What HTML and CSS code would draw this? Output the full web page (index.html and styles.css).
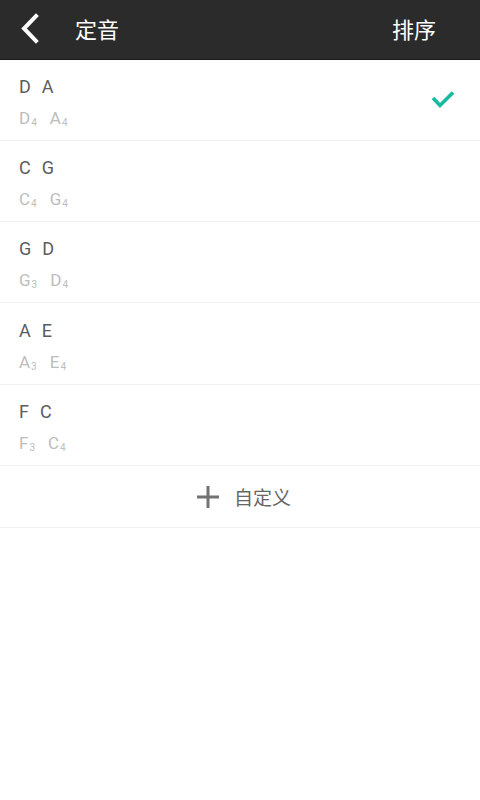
FILE: index.html
```html
<!DOCTYPE html>
<html lang="zh">
<head>
<meta charset="utf-8">
<title>定音</title>
<link rel="stylesheet" href="styles.css">
</head>
<body>
<header class="topbar">
  <svg class="back" width="22" height="32" viewBox="0 0 22 32"><polyline points="17,3 5,15.5 17,28" fill="none" stroke="#fff" stroke-width="4" stroke-linecap="square" stroke-linejoin="miter"/></svg>
  <span class="title">定音</span>
  <span class="action">排序</span>
</header>
<ul class="list">
  <li class="row">
    <div class="tuning">
      <div class="main"><span class="n">D</span><span class="n">A</span></div>
      <div class="sub"><span class="s">D<sub>4</sub></span><span class="s">A<sub>4</sub></span></div>
    </div>
    <svg class="check" width="26" height="20" viewBox="0 0 26 20"><polyline points="3,8 10,15.5 23,2.5" fill="none" stroke="#17b9a0" stroke-width="3.6" stroke-linecap="butt" stroke-linejoin="miter"/></svg>
  </li>
  <li class="row">
    <div class="tuning">
      <div class="main"><span class="n">C</span><span class="n">G</span></div>
      <div class="sub"><span class="s">C<sub>4</sub></span><span class="s">G<sub>4</sub></span></div>
    </div>
  </li>
  <li class="row">
    <div class="tuning">
      <div class="main"><span class="n">G</span><span class="n">D</span></div>
      <div class="sub"><span class="s">G<sub>3</sub></span><span class="s">D<sub>4</sub></span></div>
    </div>
  </li>
  <li class="row">
    <div class="tuning">
      <div class="main"><span class="n">A</span><span class="n">E</span></div>
      <div class="sub"><span class="s">A<sub>3</sub></span><span class="s">E<sub>4</sub></span></div>
    </div>
  </li>
  <li class="row">
    <div class="tuning">
      <div class="main"><span class="n">F</span><span class="n">C</span></div>
      <div class="sub"><span class="s">F<sub>3</sub></span><span class="s">C<sub>4</sub></span></div>
    </div>
  </li>
  <li class="add">
    <svg class="plus" width="22" height="22" viewBox="0 0 22 22"><path d="M11 0V22M0 11H22" stroke="#737373" stroke-width="3" fill="none"/></svg>
    <span class="add-label">自定义</span>
  </li>
</ul>
</body>
</html>
```

FILE: styles.css
```css
* { box-sizing: border-box; }
html, body { margin: 0; padding: 0; background: #fff; }
body {
  width: 480px;
  height: 800px;
  font-family: Roboto, "Noto Sans CJK SC", sans-serif;
}
.topbar {
  height: 60px;
  background: #2b2b2b;
  border-bottom: 1px solid #1a1a1a;
  display: flex;
  align-items: center;
  padding: 0 44px 3px 19px;
  color: #fff;
  font-family: "Noto Sans CJK SC", sans-serif;
  font-size: 22px;
}
.back { display: block; margin-right: 34px; margin-top: 2px; }
.title { flex: 1; line-height: 1; }
.action { line-height: 1; }
.list { list-style: none; margin: 0; padding: 0; }
.row {
  height: 81px;
  border-bottom: 1px solid #f2f2f2;
  display: flex;
  align-items: center;
  justify-content: space-between;
  padding: 0 24px 0 19px;
}
.row:nth-child(4) { height: 82px; }
.tuning { padding-top: 5px; }
.main {
  font-size: 18px;
  line-height: 22px;
  color: #5c5c5c;
}
.main .n:first-child { margin-right: 11px; }
.sub {
  margin-top: 9px;
  font-size: 17px;
  line-height: 22px;
  color: #bdbdbd;
}
.sub .s:first-child { margin-right: 13px; }
.sub sub {
  font-size: 10px;
  vertical-align: -2px;
  margin-left: 1px;
  line-height: 1;
}
.check { display: block; }
.add {
  height: 62px;
  border-bottom: 1px solid #f2f2f2;
  display: flex;
  align-items: center;
  justify-content: center;
  padding-left: 8px;
  gap: 15px;
}
.plus { display: block; }
.add-label {
  font-family: "Noto Sans CJK SC", sans-serif;
  font-size: 19px;
  color: #666;
  line-height: 1;
}
```
